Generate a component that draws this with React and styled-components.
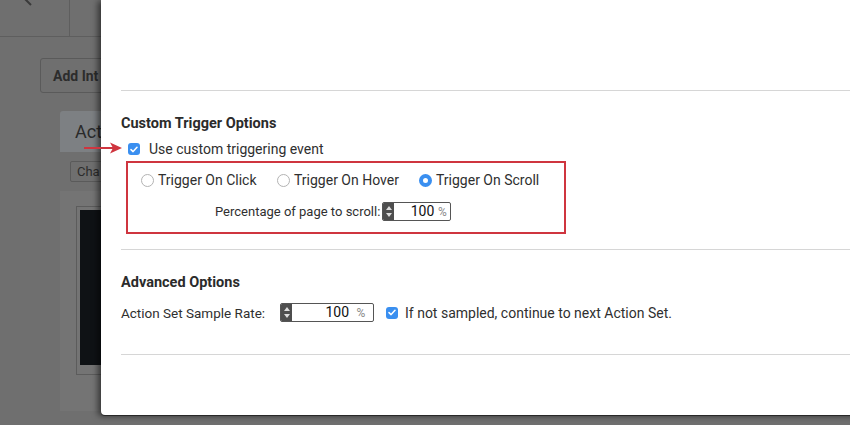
import React from 'react'
import styled, { createGlobalStyle } from 'styled-components'

const Global = createGlobalStyle`
  html, body { margin: 0; padding: 0; }
  body {
    width: 850px;
    height: 425px;
    overflow: hidden;
    font-family: Roboto, "Noto Sans", "Liberation Sans", sans-serif;
    background: #6f6f6f;
  }
`

const Page = styled.div`
  position: relative;
  width: 850px;
  height: 425px;
  background: #6f6f6f;
  overflow: hidden;
`

// dimmed app underneath the modal, only its left strip shows
const Backdrop = styled.div`
  width: 101px;
  height: 425px;
  overflow: hidden;
`

const TopBar = styled.div`
  display: flex;
  width: 200px;
  height: 36px;
  border-bottom: 1px solid #5e5e5e;
`

const BackCell = styled.div`
  width: 69px;
  border-right: 1px solid #5e5e5e;
  display: flex;
  justify-content: center;
  align-items: flex-start;
  svg { margin-top: -8px; }
`

const Body = styled.div`
  display: flex;
  flex-direction: column;
  align-items: flex-start;
  padding: 21px 0 0 40px;
`

const GhostButton = styled.div`
  flex: none;
  width: 90px;
  height: 33px;
  padding: 0 12px;
  border: 1px solid #5a5a5a;
  border-radius: 3px;
  display: flex;
  align-items: center;
  font-weight: 700;
  font-size: 14px;
  color: #2c2c2c;
  white-space: nowrap;
`

const Tab = styled.div`
  flex: none;
  margin: 18px 0 0 20px;
  height: 41px;
  width: 120px;
  padding-left: 15px;
  background: #7d8083;
  border-radius: 3px 3px 0 0;
  display: flex;
  align-items: center;
  font-size: 18px;
  color: #2a2a2a;
  white-space: nowrap;
`

const SmallButton = styled.div`
  flex: none;
  margin: 9px 0 0 30px;
  width: 50px;
  height: 19px;
  padding: 0 6px;
  border: 1px solid #5a5a5a;
  border-radius: 2px;
  font-size: 13px;
  line-height: 19px;
  color: #2c2c2c;
`

const Panel = styled.div`
  margin: 9px 0 0 20px;
  width: 100px;
  height: 220px;
  background: #747474;
  padding: 15px 0 0 16px;
  box-sizing: border-box;
  flex: none;
`

const Frame = styled.div`
  width: 80px;
  height: 169px;
  border: 1px solid #5c5c5c;
  padding: 3px;
  box-sizing: border-box;
`

const DarkBox = styled.div`
  height: 155px;
  background: #0f1215;
`

// modal
const Modal = styled.div`
  position: absolute;
  left: 101px;
  top: 0;
  width: 760px;
  height: 415px;
  background: #fff;
  border-bottom-left-radius: 4px;
  box-shadow: -3px 1px 6px rgba(0, 0, 0, 0.55), 0 1px 0 #3a3a3a;
  display: flex;
  flex-direction: column;
  padding-left: 20px;
  box-sizing: border-box;
  color: #2f2f2f;
`

const Section = styled.div`
  flex: none;
  box-sizing: border-box;
  border-top: 1px solid #d6d6d6;
  padding-top: ${({ top }) => top}px;
  height: ${({ h }) => h}px;
  margin-top: ${({ mt }) => mt || 0}px;
`

const Heading = styled.div`
  font-weight: 700;
  font-size: 14.5px;
  line-height: 18px;
  color: #2b2b2b;
`

const Row = styled.label`
  display: flex;
  align-items: center;
  font-size: 14px;
  line-height: 18px;
  gap: ${({ gap }) => gap ?? 8}px;
  margin-top: ${({ mt }) => mt || 0}px;
  margin-left: ${({ ml }) => ml || 0}px;
  white-space: nowrap;
`

const Check = styled.span`
  width: 12px;
  height: 12px;
  border-radius: 3px;
  background: #3a8ff0;
  display: inline-flex;
  align-items: center;
  justify-content: center;
  flex: none;
  margin-left: ${({ ml }) => ml || 0}px;
  margin-right: ${({ mr }) => mr || 0}px;
`

const TriggerBox = styled.div`
  margin: 3px 0 0 5px;
  width: 440px;
  height: 73px;
  border: 2px solid #cf353f;
  box-sizing: border-box;
  display: flex;
  flex-direction: column;
  padding: 8px 0 0 13px;
`

const Radios = styled.div`
  display: flex;
  align-items: center;
`

const RadioItem = styled.label`
  display: flex;
  align-items: center;
  gap: 4px;
  font-size: 14px;
  line-height: 18px;
  width: ${({ w }) => w}px;
  white-space: nowrap;
`

const Radio = styled.span`
  width: 13px;
  height: 13px;
  border-radius: 50%;
  box-sizing: border-box;
  flex: none;
  border: ${({ on }) => (on ? '4px solid #3a8ff0' : '1px solid #b3b3b3')};
  background: #fff;
`

const ScrollRow = styled.div`
  display: flex;
  align-items: center;
  gap: 2px;
  margin: 13px 0 0 74px;
  font-size: 13px;
  line-height: 18px;
`

const NumberBox = styled.div`
  display: flex;
  align-items: stretch;
  width: ${({ w }) => w}px;
  height: 19px;
  border: 1px solid #555;
  border-radius: 2px;
  box-sizing: border-box;
  overflow: hidden;
  flex: none;
`

const Spinner = styled.div`
  width: 11px;
  background: #4e4e4e;
  display: flex;
  flex-direction: column;
  justify-content: space-between;
  align-items: center;
  padding: 3px 0;
  box-sizing: border-box;
`

const Value = styled.span`
  flex: 1;
  text-align: right;
  font-size: 14px;
  line-height: 17px;
  color: #111;
`

const Unit = styled.span`
  width: ${({ w }) => w}px;
  text-align: center;
  font-size: 12px;
  line-height: 18px;
  color: #8a8a8a;
`

const SampleLabel = styled.span`
  flex: none;
  width: 159px;
  font-size: 13.5px;
`

const Arrow = styled.svg`
  position: absolute;
  left: 84px;
  top: 142px;
`

const Tick = () => (
  <svg width="8" height="7" viewBox="0 0 8 7">
    <path d="M1 3.6 L3.1 5.6 L7 1.2" fill="none" stroke="#fff" strokeWidth="1.5" strokeLinecap="round" strokeLinejoin="round" />
  </svg>
)

const Spin = () => (
  <Spinner>
    <svg width="6" height="4" viewBox="0 0 6 4"><path d="M0 4 L3 0 L6 4 Z" fill="#ddd" /></svg>
    <svg width="6" height="4" viewBox="0 0 6 4"><path d="M0 0 L3 4 L6 0 Z" fill="#ddd" /></svg>
  </Spinner>
)

export default function App() {
  return (
    <Page>
      <Global />
      <Backdrop>
        <TopBar>
          <BackCell>
            <svg width="24" height="14" viewBox="0 0 24 14">
              <path d="M2 7 H22 M2 7 L8 1 M2 7 L8 13" fill="none" stroke="#3a3a3a" strokeWidth="2" />
            </svg>
          </BackCell>
        </TopBar>
        <Body>
          <GhostButton>Add Int</GhostButton>
          <Tab>Act</Tab>
          <SmallButton>Cha</SmallButton>
          <Panel>
            <Frame>
              <DarkBox />
            </Frame>
          </Panel>
        </Body>
      </Backdrop>

      <Modal>
        <Section top={24} h={159} mt={90}>
          <Heading>Custom Trigger Options</Heading>
          <Row mt={7} ml={7} gap={9}>
            <Check><Tick /></Check>
            Use custom triggering event
          </Row>
          <TriggerBox>
            <Radios>
              <RadioItem w={136}><Radio />Trigger On Click</RadioItem>
              <RadioItem w={142}><Radio on={false} />Trigger On Hover</RadioItem>
              <RadioItem w={140}><Radio on />Trigger On Scroll</RadioItem>
            </Radios>
            <ScrollRow>
              Percentage of page to scroll:
              <NumberBox w={69}>
                <Spin />
                <Value>100</Value>
                <Unit w={16}>%</Unit>
              </NumberBox>
            </ScrollRow>
          </TriggerBox>
        </Section>
        <Section top={24} h={105}>
          <Heading>Advanced Options</Heading>
          <Row mt={11} gap={0}>
            <SampleLabel>Action Set Sample Rate:</SampleLabel>
            <NumberBox w={94}>
              <Spin />
              <Value>100</Value>
              <Unit w={24}>%</Unit>
            </NumberBox>
            <Check ml={12} mr={7}><Tick /></Check>
            If not sampled, continue to next Action Set.
          </Row>
        </Section>
        <Section top={0} h={60} />
      </Modal>

      <Arrow width="40" height="12" viewBox="0 0 40 12">
        <path d="M0 6 H30" stroke="#cf353f" strokeWidth="2" />
        <path d="M26 0.5 L38 6 L26 11.5 L29 6 Z" fill="#cf353f" />
      </Arrow>
    </Page>
  )
}
